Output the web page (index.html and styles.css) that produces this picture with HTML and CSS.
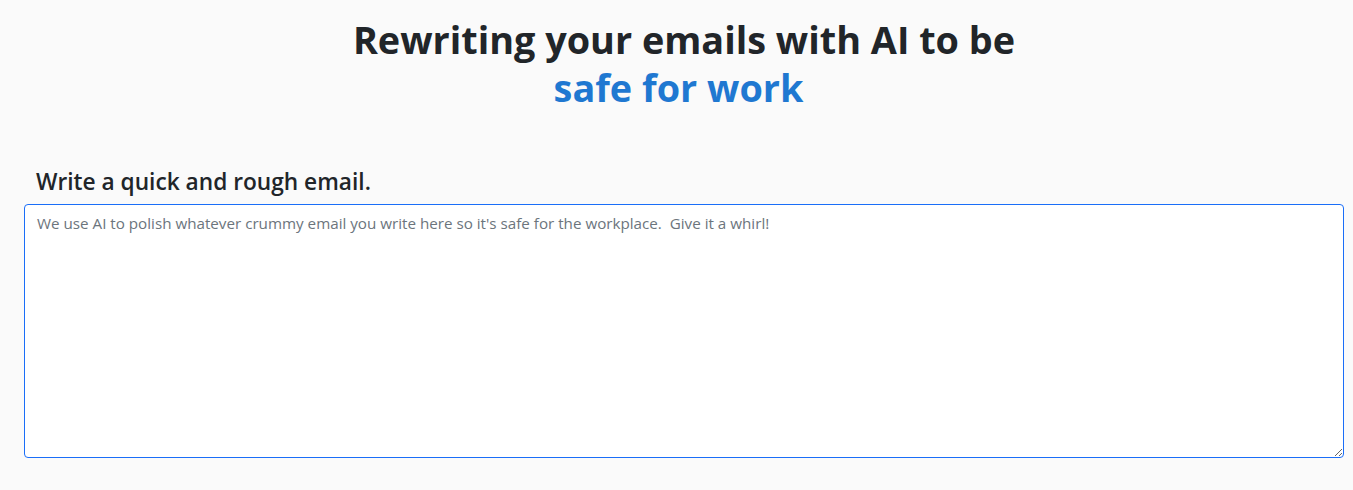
FILE: index.html
```html
<!DOCTYPE html>
<html lang="en">
<head>
    <meta charset="UTF-8">
    <title>Rewriting your emails with AI</title>
    <link rel="stylesheet" href="styles.css">
</head>
<body>
    <main class="container">
        <h1 class="title">
            Rewriting your emails with AI to be<br>
            <span class="accent">safe for work</span>
        </h1>

        <form class="email-form">
            <label for="draft" class="form-label">Write a quick and rough email.</label>
            <textarea id="draft" class="form-control" placeholder="We use AI to polish whatever crummy email you write here so it's safe for the workplace.  Give it a whirl!"></textarea>
        </form>
    </main>
</body>
</html>
```
FILE: styles.css
```css
body {
    margin: 0;
    background-color: #fafafa;
    color: #212529;
    font-family: "Open Sans", "Noto Sans", sans-serif;
}

.container {
    padding: 16px 9px 20px 24px;
}

.title {
    margin: 0;
    text-align: center;
    font-size: 37.8px;
    line-height: 48px;
    font-weight: 700;
    color: #212529;
}

.accent {
    display: inline-block;
    padding-right: 11px;
    color: #1f78d1;
}

.email-form {
    margin-top: 56px;
}

.form-label {
    display: block;
    padding-left: 12px;
    margin-bottom: 9px;
    font-size: 22.7px;
    line-height: 27px;
    font-weight: 600;
}

.form-control {
    display: block;
    width: 100%;
    height: 254px;
    box-sizing: border-box;
    margin: 0;
    padding: 6px 12px;
    font-family: inherit;
    font-size: 15.2px;
    line-height: 24px;
    color: #212529;
    background-color: #fff;
    border: 1px solid #1a6ef8;
    border-radius: 4px;
    outline: none;
}

.form-control::placeholder {
    color: #6c757d;
}
```
